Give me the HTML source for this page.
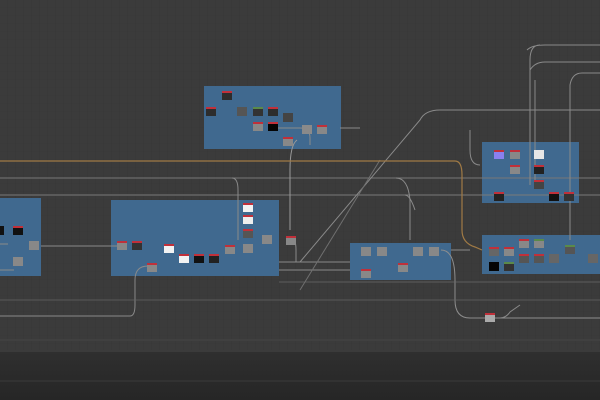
<!DOCTYPE html>
<html><head><meta charset="utf-8"><style>
html,body{margin:0;padding:0;width:600px;height:400px;overflow:hidden;background:#3b3b3b}
svg{display:block}
</style></head><body>
<svg width="600" height="400" viewBox="0 0 600 400" xmlns="http://www.w3.org/2000/svg">
<defs>
<pattern id="g" width="8" height="8" patternUnits="userSpaceOnUse"><path d="M8 0V8H0" fill="none" stroke="#353535" stroke-width="0.6"/></pattern>
<linearGradient id="bt" x1="0" y1="0" x2="0" y2="1"><stop offset="0" stop-color="#2f2f2f"/><stop offset="1" stop-color="#262626"/></linearGradient>
</defs>
<rect width="600" height="400" fill="#3b3b3b"/>
<rect width="600" height="350" fill="url(#g)"/>
<line x1="0" y1="340" x2="600" y2="340" stroke="#464646" stroke-width="1"/>
<rect y="352" width="600" height="48" fill="url(#bt)"/>
<line x1="0" y1="381" x2="600" y2="381" stroke="#3a3a3a" stroke-width="1"/>

<!-- frames -->
<g fill="#40698f">
<rect x="204" y="86" width="137" height="63"/>
<rect x="111" y="200" width="168" height="76"/>
<rect x="0" y="198" width="41" height="78"/>
<rect x="350" y="243" width="101" height="37"/>
<rect x="482" y="142" width="97" height="61"/>
<rect x="482" y="235" width="118" height="39"/>
</g>

<!-- wires -->
<g fill="none" stroke="#8a8a8a" stroke-width="1">
<path d="M0 178H600" stroke="#777"/>
<path d="M0 195H600" stroke="#7a7a7a"/>
<path d="M0 316H130Q135 316 135 305V280Q135 266 148 266"/>
<path d="M0 244H8M0 270H14"/>
<path d="M41 246H120"/>
<path d="M279 262H350"/>
<path d="M279 270H350"/>
<path d="M232 178Q238 178 238 190V240"/>
<path d="M290 237Q296 237 296 250V262H300"/>
<path d="M300 262L420 120Q425 110 440 110H600"/>
<path d="M300 290L380 160" stroke="#6f6f6f"/>
<path d="M276 128H300Q310 128 310 138V145"/>
<path d="M297 140Q290 145 290 170V230" stroke="#9a9a9a"/>
<path d="M396 178Q408 178 410 200V240" />
<path d="M451 250H470M405 195Q410 195 415 210"/>
<path d="M441 250Q455 250 455 280V300Q455 318 470 318H600" stroke="#8e8e8e"/>
<path d="M470 318H488"/>
<path d="M500 318Q506 318 510 312L520 305"/>
<path d="M0 300H600" stroke="#666" stroke-width="0.7"/>
<path d="M279 282H600" stroke="#6a6a6a" stroke-width="0.8"/>
<path d="M527 50Q532 45 545 45H600M530 185V60Q530 45 540 45"/>
<path d="M530 70Q535 62 545 62H600M535 180V80"/>
<path d="M570 240V85Q572 73 582 73H600"/>
<path d="M480 165Q470 165 470 150V130"/>
<path d="M340 128H360"/>
</g>
<path d="M0 161H455Q462 161 462 175V230Q462 243 475 247L482 250" fill="none" stroke="#a07a45" stroke-width="1.2"/>

<!-- nodes: grey body, red top -->
<g>
<!-- frame A -->
<g transform="translate(222,91)"><rect width="10" height="9" fill="#2d2d2d"/><rect width="10" height="2" fill="#c0303a"/></g>
<g transform="translate(206,107)"><rect width="10" height="9" fill="#2d2d2d"/><rect width="10" height="2" fill="#c0303a"/></g>
<g transform="translate(237,107)"><rect width="10" height="9" fill="#555"/></g>
<g transform="translate(253,107)"><rect width="10" height="9" fill="#333"/><rect width="10" height="2" fill="#5a8a4a"/></g>
<g transform="translate(268,107)"><rect width="10" height="9" fill="#2d2d2d"/><rect width="10" height="2" fill="#c0303a"/></g>
<g transform="translate(283,113)"><rect width="10" height="9" fill="#444"/></g>
<g transform="translate(253,122)"><rect width="10" height="9" fill="#888"/><rect width="10" height="2" fill="#c0303a"/></g>
<g transform="translate(268,122)"><rect width="10" height="9" fill="#050505"/><rect width="10" height="2" fill="#c0303a"/></g>
<g transform="translate(302,125)"><rect width="10" height="9" fill="#8a8a8a"/></g>
<g transform="translate(317,125)"><rect width="10" height="9" fill="#888"/><rect width="10" height="2" fill="#c0303a"/></g>
<g transform="translate(283,137)"><rect width="10" height="9" fill="#888"/><rect width="10" height="2" fill="#c0303a"/></g>
<!-- frame B -->
<g transform="translate(117,241)"><rect width="10" height="9" fill="#888"/><rect width="10" height="2" fill="#c0303a"/></g>
<g transform="translate(132,241)"><rect width="10" height="9" fill="#333"/><rect width="10" height="2" fill="#c0303a"/></g>
<g transform="translate(147,263)"><rect width="10" height="9" fill="#888"/><rect width="10" height="2" fill="#c0303a"/></g>
<g transform="translate(164,244)"><rect width="10" height="9" fill="#f2f2f2"/><rect width="10" height="2" fill="#c0303a"/></g>
<g transform="translate(179,254)"><rect width="10" height="9" fill="#f2f2f2"/><rect width="10" height="2" fill="#c0303a"/></g>
<g transform="translate(194,254)"><rect width="10" height="9" fill="#111"/><rect width="10" height="2" fill="#c0303a"/></g>
<g transform="translate(209,254)"><rect width="10" height="9" fill="#222"/><rect width="10" height="2" fill="#c0303a"/></g>
<g transform="translate(225,245)"><rect width="10" height="9" fill="#888"/><rect width="10" height="2" fill="#c0303a"/></g>
<g transform="translate(243,203)"><rect width="10" height="9" fill="#f2f2f2"/><rect width="10" height="2" fill="#c0303a"/></g>
<g transform="translate(243,215)"><rect width="10" height="9" fill="#eee"/><rect width="10" height="2" fill="#c0303a"/></g>
<g transform="translate(243,229)"><rect width="10" height="9" fill="#555"/><rect width="10" height="2" fill="#c0303a"/></g>
<g transform="translate(243,244)"><rect width="10" height="9" fill="#888"/></g>
<g transform="translate(262,235)"><rect width="10" height="9" fill="#888"/></g>
<g transform="translate(286,236)"><rect width="10" height="9" fill="#888"/><rect width="10" height="2" fill="#c0303a"/></g>
<!-- frame C -->
<g transform="translate(13,226)"><rect width="10" height="9" fill="#111"/><rect width="10" height="2" fill="#c0303a"/></g>
<g transform="translate(0,226)"><rect width="4" height="9" fill="#111"/></g>
<g transform="translate(29,241)"><rect width="10" height="9" fill="#888"/></g>
<g transform="translate(13,257)"><rect width="10" height="9" fill="#888"/></g>
<!-- frame D -->
<g transform="translate(361,247)"><rect width="10" height="9" fill="#888"/></g>
<g transform="translate(377,247)"><rect width="10" height="9" fill="#888"/></g>
<g transform="translate(361,269)"><rect width="10" height="9" fill="#888"/><rect width="10" height="2" fill="#c0303a"/></g>
<g transform="translate(398,263)"><rect width="10" height="9" fill="#888"/><rect width="10" height="2" fill="#c0303a"/></g>
<g transform="translate(413,247)"><rect width="10" height="9" fill="#888"/></g>
<g transform="translate(429,247)"><rect width="10" height="9" fill="#888"/></g>
<!-- frame E -->
<g transform="translate(494,150)"><rect width="10" height="9" fill="#8a80ee"/><rect width="10" height="2" fill="#c0303a"/></g>
<g transform="translate(510,150)"><rect width="10" height="9" fill="#888"/><rect width="10" height="2" fill="#c0303a"/></g>
<g transform="translate(534,150)"><rect width="10" height="9" fill="#e6e6e6"/></g>
<g transform="translate(510,165)"><rect width="10" height="9" fill="#888"/><rect width="10" height="2" fill="#c0303a"/></g>
<g transform="translate(534,165)"><rect width="10" height="9" fill="#222"/><rect width="10" height="2" fill="#c0303a"/></g>
<g transform="translate(534,180)"><rect width="10" height="9" fill="#444"/><rect width="10" height="2" fill="#c0303a"/></g>
<g transform="translate(494,192)"><rect width="10" height="9" fill="#222"/><rect width="10" height="2" fill="#c0303a"/></g>
<g transform="translate(549,192)"><rect width="10" height="9" fill="#111"/><rect width="10" height="2" fill="#c0303a"/></g>
<g transform="translate(564,192)"><rect width="10" height="9" fill="#333"/><rect width="10" height="2" fill="#c0303a"/></g>
<!-- frame F -->
<g transform="translate(489,247)"><rect width="10" height="9" fill="#666"/><rect width="10" height="2" fill="#c0303a"/></g>
<g transform="translate(489,262)"><rect width="10" height="9" fill="#050505"/></g>
<g transform="translate(504,247)"><rect width="10" height="9" fill="#888"/><rect width="10" height="2" fill="#c0303a"/></g>
<g transform="translate(504,262)"><rect width="10" height="9" fill="#333"/><rect width="10" height="2" fill="#5a8a4a"/></g>
<g transform="translate(519,239)"><rect width="10" height="9" fill="#888"/><rect width="10" height="2" fill="#c0303a"/></g>
<g transform="translate(519,254)"><rect width="10" height="9" fill="#555"/><rect width="10" height="2" fill="#c0303a"/></g>
<g transform="translate(534,239)"><rect width="10" height="9" fill="#888"/><rect width="10" height="2" fill="#5a8a4a"/></g>
<g transform="translate(534,254)"><rect width="10" height="9" fill="#555"/><rect width="10" height="2" fill="#c0303a"/></g>
<g transform="translate(549,254)"><rect width="10" height="9" fill="#666"/></g>
<g transform="translate(565,245)"><rect width="10" height="9" fill="#555"/><rect width="10" height="2" fill="#5a8a4a"/></g>
<g transform="translate(588,254)"><rect width="10" height="9" fill="#666"/></g>
<!-- loose -->
<g transform="translate(485,313)"><rect width="10" height="9" fill="#aaa"/><rect width="10" height="2" fill="#c0303a"/></g>
</g>
</svg>
</body></html>
